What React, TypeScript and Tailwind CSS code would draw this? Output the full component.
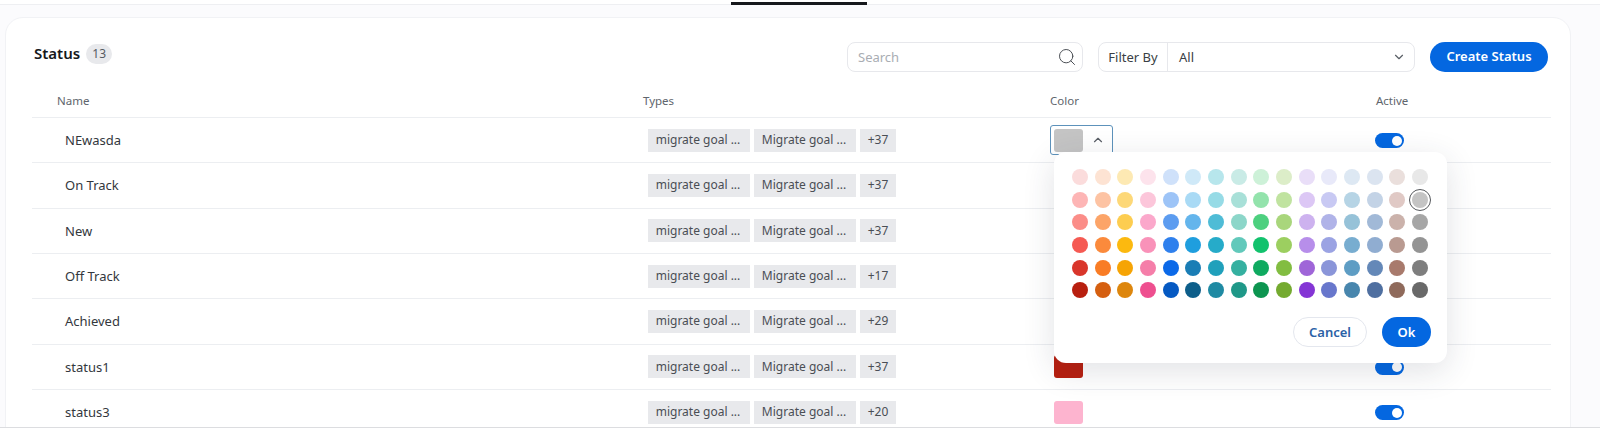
import { ChevronDown, ChevronUp, Search } from "lucide-react";

const rows = [
  { name: "NEwasda", more: "+37", color: "#c4c4c4" },
  { name: "On Track", more: "+37", color: "#12c26d" },
  { name: "New", more: "+37", color: "#2f80ed" },
  { name: "Off Track", more: "+17", color: "#f6a405" },
  { name: "Achieved", more: "+29", color: "#0faa60" },
  { name: "status1", more: "+37", color: "#b81f0f" },
  { name: "status3", more: "+20", color: "#fdb4cf" },
];

const palette = [
  ["#fbdcdc", "#fde3d3", "#fde9b3", "#fde3ec", "#cfe1fa", "#cfe9f8", "#b7e6ec", "#c9ebe6", "#cdf1d8", "#dcedc8", "#e9def8", "#e8e9f9", "#dde8f3", "#dbe4f0", "#eadfdc", "#e8e8e8"],
  ["#fdb5b5", "#fdc3a3", "#fdd878", "#fcc6da", "#9dc4f7", "#a9daf5", "#96dbe6", "#a8e0d8", "#93e3ac", "#c0e3a0", "#dcc7f5", "#c8c9f3", "#b6d4e5", "#c3d3e6", "#e0c9c5", "#c4c4c4"],
  ["#fb8d88", "#fca468", "#fdcd50", "#fba8cb", "#5c9cf0", "#64b5ec", "#4fbcd6", "#8cd6c9", "#4dd07f", "#a9d67c", "#cdb2ef", "#b0b3e8", "#96c2d8", "#a1b9d7", "#cbb2ab", "#a6a6a6"],
  ["#f55a53", "#fb8a3c", "#fcb90f", "#f992b9", "#2f80ed", "#1f9ede", "#26abc9", "#62c9bb", "#12c26d", "#9ccf60", "#b78eea", "#9ba3e3", "#78add0", "#90add1", "#b99a91", "#949494"],
  ["#d9362b", "#f97c25", "#f6a405", "#f57ea9", "#0b69e8", "#1a7db5", "#20a0bb", "#35b0a0", "#0faa60", "#82bd41", "#9f65d8", "#8a95d9", "#5e9dc4", "#6488b8", "#a87a6c", "#7e7e7e"],
  ["#b81f0f", "#d55f10", "#dd860d", "#ee4f8f", "#0559c2", "#0d5e8a", "#1f8aa3", "#1f9888", "#0d9550", "#74aa30", "#8435d5", "#6877cc", "#4886ad", "#4f6fa0", "#8f6a5b", "#696969"],
];

function Tag({ label, wide = true }: { label: string; wide?: boolean }) {
  return (
    <div
      className={`flex h-[23px] items-center justify-center bg-[#e8e9ec] text-[12px] text-[#4a4e54] ${
        wide ? "w-[102px] pr-[2px]" : "w-[36px]"
      }`}
    >
      {label}
    </div>
  );
}

function Toggle() {
  return (
    <div className="mt-[1px] flex h-[15px] w-[29px] items-center justify-end rounded-full bg-[#0467e0] pr-[2px]">
      <div className="h-[10px] w-[10px] rounded-full bg-white" />
    </div>
  );
}

function ColorPopup() {
  return (
    <div className="absolute left-[3px] top-[26px] z-10 h-[211px] w-[393px] rounded-[12px] bg-white pl-[18px] pt-[17px] shadow-[0_8px_32px_rgba(40,50,70,0.14)]">
      <div className="grid grid-cols-[repeat(16,16px)] gap-[6.67px]">
        {palette.flat().map((color, i) => (
          <div key={i} className="relative h-4 w-4 rounded-full" style={{ background: color }}>
            {i === 31 && (
              <div className="absolute -inset-[3px] rounded-full border-[1.5px] border-[#55585c]" />
            )}
          </div>
        ))}
      </div>
      <div className="mt-[19px] flex justify-end gap-[15px] pr-[16px]">
        <button className="h-[30px] w-[74px] rounded-full border border-[#e4e7ee] text-[13px] font-semibold text-[#2c62a6]">
          Cancel
        </button>
        <button className="h-[30px] w-[49px] rounded-full bg-[#0467e0] text-[13px] font-semibold text-white">
          Ok
        </button>
      </div>
    </div>
  );
}

export default function App() {
  return (
    <div className="flex h-[428px] w-[1600px] flex-col overflow-hidden bg-[#fbfbfd] font-['Noto_Sans',sans-serif]">
      <div className="flex h-[5px] shrink-0 border-b border-[#eeeff2] bg-white pl-[731px]">
        <div className="mt-[2px] h-[3px] w-[136px] bg-[#16181c]" />
      </div>

      <div className="min-h-0 flex-1 pl-[5px] pr-[29px] pt-[12px]">
        <div className="h-[430px] rounded-t-[18px] border border-[#f1f2f5] bg-white pl-[26px] pr-[19px] pt-[24px]">
          <div className="flex h-[30px] items-center pl-[2px] pr-[3px]">
            <div className="mb-[7px] flex items-center">
              <span className="text-[15px] font-semibold text-[#16181c]">Status</span>
              <span className="ml-[6px] flex h-[20px] w-[26px] items-center justify-center rounded-full bg-[#e8e9ec] text-[12px] text-[#555a60]">
                13
              </span>
            </div>

            <div className="ml-auto flex h-[30px] w-[236px] items-center justify-between rounded-[8px] border border-[#e7e8ec] pl-[10px] pr-[5px]">
              <span className="pt-[1px] text-[13px] text-[#a9adb3]">Search</span>
              <Search size={20} strokeWidth={1.2} className="text-[#4c5056]" />
            </div>

            <div className="ml-[15px] flex h-[30px] w-[317px] items-center rounded-[8px] border border-[#e7e8ec]">
              <div className="flex h-full w-[69px] items-center justify-center border-r border-[#e7e8ec] pt-[1px] text-[13px] text-[#3a3f45]">
                Filter By
              </div>
              <span className="ml-[11px] pt-[1px] text-[13px] text-[#3a3f45]">All</span>
              <ChevronDown size={14} className="ml-auto mr-[8px] text-[#5a5f66]" />
            </div>

            <button className="ml-[15px] h-[30px] w-[118px] rounded-full bg-[#0467e0] text-[13px] font-semibold text-white">
              Create Status
            </button>
          </div>

          <div className="grid h-[46px] grid-cols-[611px_407px_325px_176px] items-end border-b border-[#eceef1] pb-[8px] text-[11.5px] text-[#60656c]">
            <div className="pl-[25px]">Name</div>
            <div>Types</div>
            <div>Color</div>
            <div className="pl-[1px]">Active</div>
          </div>

          {rows.map((row, i) => (
            <div
              key={row.name}
              className="grid h-[45.33px] grid-cols-[611px_407px_325px_176px] items-center border-b border-[#eceef1]"
            >
              <div className="mt-[1px] pl-[33px] text-[13px] text-[#33373d]">{row.name}</div>
              <div className="flex gap-[4px] pl-[5px]">
                <Tag label="migrate goal ..." />
                <Tag label="Migrate goal ..." />
                <Tag label={row.more} wide={false} />
              </div>
              {i === 0 ? (
                <div className="relative flex h-[30px] w-[63px] items-center rounded-[3px] border border-[#5d92bb] pl-[3px]">
                  <div className="h-[23px] w-[29px] rounded-[3px]" style={{ background: row.color }} />
                  <ChevronUp size={14} className="ml-[8px] text-[#5a5f66]" />
                  <ColorPopup />
                </div>
              ) : (
                <div className="pl-[4px]">
                  <div className="h-[23px] w-[29px] rounded-[3px]" style={{ background: row.color }} />
                </div>
              )}
              <Toggle />
            </div>
          ))}
        </div>
      </div>

      <div className="relative z-20 h-px shrink-0 bg-[#dcdde0]" />
    </div>
  );
}
